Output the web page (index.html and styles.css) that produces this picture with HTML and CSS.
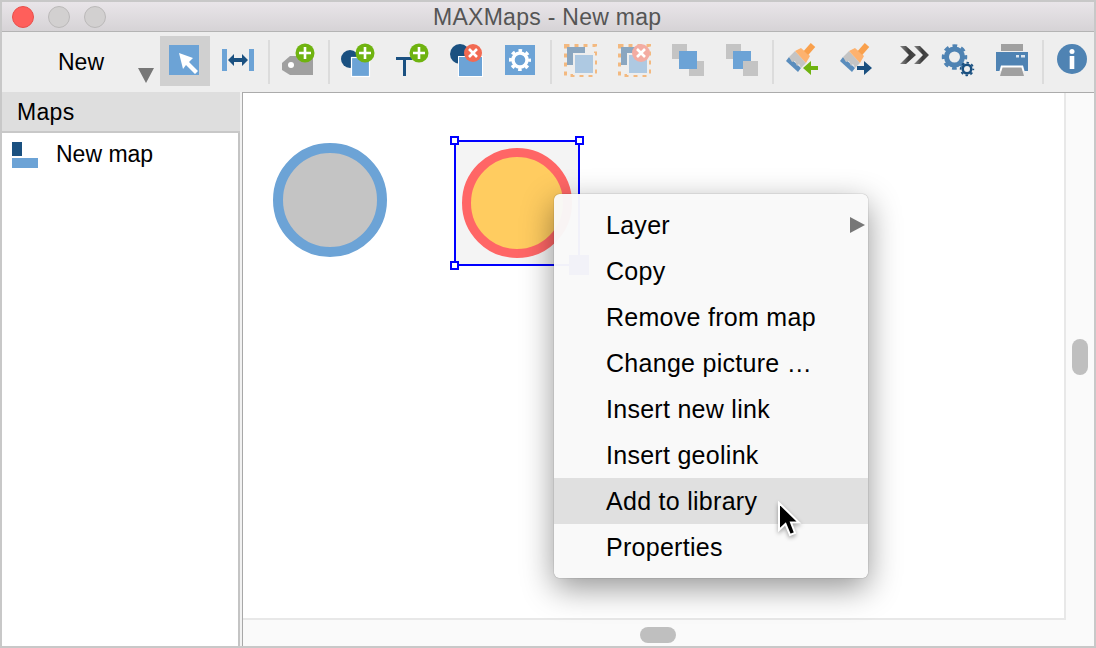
FILE: index.html
```html
<!DOCTYPE html>
<html lang="en">
<head>
<meta charset="utf-8">
<title>MAXMaps - New map</title>
<link rel="stylesheet" href="styles.css">
</head>
<body>
<div class="window">
  <header class="titlebar">
    <div class="lights"><span class="light red"></span><span class="light"></span><span class="light"></span></div>
    <div class="title">MAXMaps - New map</div>
  </header>
  <nav class="toolbar">
    <div class="new-btn"><span class="new-label">New</span><svg class="new-arrow" width="16" height="15" viewBox="0 0 16 15"><path d="M0 0H16L8 15Z" fill="#777"/></svg></div>
    <svg class="tool selected" width="50" height="50" viewBox="0 0 50 50"><rect x="9" y="9" width="30" height="30" fill="#6ca3d6"/><path d="M19 17 33 22 29 26 38 35 35 38 26 29 23 33Z" fill="#fff"/></svg>
    <svg class="tool" width="54" height="50" viewBox="0 0 54 50"><rect x="11" y="13" width="5" height="22" fill="#6ca3d6"/><rect x="38" y="13" width="5" height="22" fill="#6ca3d6"/><path d="M17 24 23 18V22H31V18L37 24 31 30V26H23V30Z" fill="#1a5080"/></svg>
    <span class="sep"></span>
    <svg class="tool" width="54" height="50" viewBox="0 0 54 50"><path d="M11 27 19 20H42V39H19L11 34Z" fill="#a0a0a0"/><circle cx="20" cy="29" r="3" fill="#fff"/><circle cx="34" cy="17" r="9.5" fill="#6fb310"/><path d="M34 11V23M28 17H40" stroke="#fff" stroke-width="2.6"/></svg>
    <span class="sep"></span>
    <svg class="tool" width="54" height="50" viewBox="0 0 54 50"><circle cx="19" cy="23" r="9" fill="#1a5080"/><rect x="20.5" y="21.5" width="18" height="19" fill="#6ca3d6" stroke="#fff" stroke-width="1.2"/><circle cx="34" cy="17" r="9.5" fill="#6fb310"/><path d="M34 11V23M28 17H40" stroke="#fff" stroke-width="2.6"/></svg>
    <svg class="tool" width="54" height="50" viewBox="0 0 54 50"><rect x="11" y="21" width="16" height="3" fill="#1a5080"/><rect x="18" y="24" width="3" height="16" fill="#1a5080"/><circle cx="34" cy="17" r="9.5" fill="#6fb310"/><path d="M34 11V23M28 17H40" stroke="#fff" stroke-width="2.6"/></svg>
    <svg class="tool" width="54" height="50" viewBox="0 0 54 50"><circle cx="21" cy="18" r="10" fill="#1a5080"/><rect x="19.5" y="20.5" width="24" height="20" fill="#6ca3d6" stroke="#fff" stroke-width="1"/><circle cx="34" cy="17" r="9" fill="#f26a52"/><path d="M30 13 38 21M38 13 30 21" stroke="#fff" stroke-width="2.6"/></svg>
    <svg class="tool" width="54" height="50" viewBox="0 0 54 50"><rect x="12" y="9" width="30" height="30" fill="#6ca3d6"/><circle cx="27" cy="24" r="7" fill="none" stroke="#fff" stroke-width="3.4"/><circle cx="27" cy="24" r="9.5" fill="none" stroke="#fff" stroke-width="3" stroke-dasharray="3.6 3.86" stroke-dashoffset="1.8"/></svg>
    <span class="sep"></span>
    <svg class="tool" width="54" height="50" viewBox="0 0 54 50"><rect x="12.5" y="9.5" width="30" height="30" fill="none" stroke="#f3b980" stroke-width="3" stroke-dasharray="4 5"/><rect x="14" y="11" width="18" height="18" fill="#8aa6c0"/><rect x="21" y="18" width="20" height="20" fill="#aec9e2" stroke="#eee" stroke-width="2"/></svg>
    <svg class="tool" width="54" height="50" viewBox="0 0 54 50"><rect x="12.5" y="9.5" width="30" height="30" fill="none" stroke="#f3b980" stroke-width="3" stroke-dasharray="4 5"/><rect x="14" y="11" width="18" height="18" fill="#8aa6c0"/><rect x="21" y="18" width="20" height="20" fill="#aec9e2" stroke="#eee" stroke-width="2"/><circle cx="34" cy="17" r="9" fill="#f3aca2"/><path d="M30 13 38 21M38 13 30 21" stroke="#fff" stroke-width="2.6"/></svg>
    <svg class="tool" width="54" height="50" viewBox="0 0 54 50"><rect x="11" y="8" width="15" height="15" fill="#c4c4c4"/><rect x="28" y="25" width="15" height="15" fill="#c4c4c4"/><rect x="18" y="15" width="18" height="18" fill="#6ca3d6"/></svg>
    <svg class="tool" width="54" height="50" viewBox="0 0 54 50"><rect x="11" y="8" width="15" height="15" fill="#c4c4c4"/><rect x="18" y="15" width="18" height="18" fill="#6ca3d6"/><rect x="28" y="25" width="15" height="15" fill="#c4c4c4"/></svg>
    <span class="sep"></span>
    <svg class="tool" width="54" height="50" viewBox="0 0 54 50"><path d="M11 25 14 21 26 32 23 36Z" fill="#5a8dbd"/><path d="M14 21 20 15 31 27 26 32 24 28 22 30 20 25 17 26Z" fill="#c4c4c4"/><path d="M20 15 26 12 35 20 31 27Z" fill="#fdb26f"/><path d="M38 9 31 17" stroke="#f9a04c" stroke-width="6"/><path d="M28 32 36 25V30H43V34H36V39Z" fill="#6fb310"/></svg>
    <svg class="tool" width="54" height="50" viewBox="0 0 54 50"><path d="M11 25 14 21 26 32 23 36Z" fill="#5a8dbd"/><path d="M14 21 20 15 31 27 26 32 24 28 22 30 20 25 17 26Z" fill="#c4c4c4"/><path d="M20 15 26 12 35 20 31 27Z" fill="#fdb26f"/><path d="M38 9 31 17" stroke="#f9a04c" stroke-width="6"/><path d="M43 32 35 25V30H28V34H35V39Z" fill="#1a5080"/></svg>
    <svg class="tool narrow" width="48" height="50" viewBox="0 0 48 50"><defs><linearGradient id="chev"><stop offset="0" stop-color="#8a8a8a"/><stop offset=".55" stop-color="#3c3c3c"/><stop offset="1" stop-color="#4c4c4c"/></linearGradient></defs><path d="M17 10H23L33 19 23 28H17L26 19Z" fill="url(#chev)"/><path d="M31 10H37L46 19 37 28H31L40 19Z" fill="url(#chev)"/></svg>
    <svg class="tool" width="54" height="50" viewBox="0 0 54 50"><circle cx="23.500" cy="21" r="8" fill="none" stroke="#4f83b3" stroke-width="5"/><circle cx="23.500" cy="21" r="11" fill="none" stroke="#4f83b3" stroke-width="3.500" stroke-dasharray="4.600 4.040" stroke-dashoffset="2.300"/><circle cx="36" cy="33" r="4.250" fill="none" stroke="#1a5080" stroke-width="2.500"/><circle cx="36" cy="33" r="6.300" fill="none" stroke="#1a5080" stroke-width="1.800" stroke-dasharray="2.500 2.450" stroke-dashoffset="1.250"/></svg>
    <svg class="tool" width="54" height="50" viewBox="0 0 54 50"><rect x="16" y="8" width="22" height="7" fill="#a0a0a0"/><rect x="11" y="16" width="32" height="19" fill="#4f83b3"/><rect x="31" y="19" width="3" height="2.500" fill="#dce6f0"/><rect x="36" y="19" width="4" height="2.500" fill="#dce6f0"/><path d="M16 29.500H38L39.500 35H14.500Z" fill="#fff"/><path d="M17.500 31.500H36.500L39 40H15Z" fill="#a0a0a0"/></svg>
    <span class="sep"></span>
    <svg class="tool last" width="54" height="50" viewBox="0 0 54 50"><circle cx="27" cy="23" r="15" fill="#4f83b3"/><circle cx="27" cy="15.500" r="2.500" fill="#fff"/><rect x="24.700" y="20" width="4.600" height="13" fill="#fff"/></svg>
  </nav>
  <main class="body">
    <aside class="sidebar">
      <div class="side-head">Maps</div>
      <div class="side-row">
        <svg class="map-icon" width="26" height="26" viewBox="0 0 26 26"><rect width="10" height="14" fill="#1a5080"/><rect y="16" width="26" height="10" fill="#6ca3d6"/></svg>
        <span>New map</span>
      </div>
    </aside>
    <section class="workspace">
      <div class="pane">
        <div class="view-row">
          <div class="canvas">
            <div class="circle blue"></div>
            <div class="selection">
              <span class="handle tl"></span><span class="handle tr"></span><span class="handle bl"></span><span class="handle br"></span>
            </div>
            <div class="circle orange"></div>
            <div class="menu">
              <div class="item">Layer<span class="sub-arrow"></span></div>
              <div class="item">Copy</div>
              <div class="item">Remove from map</div>
              <div class="item">Change picture …</div>
              <div class="item">Insert new link</div>
              <div class="item">Insert geolink</div>
              <div class="item active">Add to library</div>
              <div class="item">Properties</div>
              <span class="ghost"></span>
            </div>
            <svg class="cursor" width="28" height="38" viewBox="0 0 28 38"><path d="M3 2V29L9.500 23 14 34 19 32 15 21.500H23Z" fill="#000" stroke="#fff" stroke-width="2"/></svg>
          </div>
          <div class="vscroll"><span class="vthumb"></span></div>
        </div>
        <div class="hscroll"><span class="hthumb"></span></div>
      </div>
    </section>
  </main>
</div>
</body>
</html>
```
FILE: styles.css
```css
* { box-sizing: border-box; }
html, body { margin: 0; padding: 0; }
body { width: 1096px; height: 648px; overflow: hidden; background: #fff; font-family: "Liberation Sans", Arial, sans-serif; color: #000; }
.window { width: 1096px; height: 648px; border: 2px solid #c8c8c8; display: flex; flex-direction: column; overflow: hidden; }

.titlebar { height: 30px; flex: none; display: flex; align-items: center; position: relative; background: linear-gradient(#e9e5e9, #d6d3d6); border-bottom: 1px solid #b4b4b4; }
.lights { display: flex; gap: 14px; margin-left: 10px; }
.light { width: 22px; height: 22px; border-radius: 50%; background: #d2d0d0; border: 1px solid #bbb9b9; }
.light.red { background: #ff5f5b; border-color: #e8504c; }
.title { position: absolute; left: 431px; top: 2px; font-size: 23px; letter-spacing: .28px; line-height: 26px; color: #555; white-space: nowrap; }

.toolbar { height: 60px; flex: none; display: flex; align-items: flex-start; padding-top: 4px; background: #eee; overflow: hidden; }
.new-btn { width: 158px; height: 50px; flex: none; display: flex; padding-left: 56px; }
.new-label { font-size: 23px; line-height: 52px; }
.new-arrow { margin-left: 34px; margin-top: 32px; }
.tool { flex: none; display: block; }
.tool.selected { background: #d0d0d0; margin-right: 1px; }
.sep { flex: none; width: 6px; height: 44px; margin-top: 4px; padding-left: 3px; display: flex; }
.sep::before { content: ""; width: 2px; background: #dcdcdc; }

.body { flex: 1; display: flex; min-height: 0; }
.sidebar { width: 238px; flex: none; background: #fff; border-right: 2px solid #c4c4c4; }
.side-head { height: 41px; margin-right: -2px; background: #dedede; border-bottom: 2px solid #c8c8c8; padding-left: 15px; font-size: 23px; letter-spacing: .3px; line-height: 40px; }
.side-row { display: flex; align-items: flex-start; padding: 9px 0 0 10px; font-size: 23px; line-height: 24px; }
.map-icon { margin-right: 18px; }

.workspace { flex: 1; display: flex; min-width: 0; padding-left: 2px; background: #f2f2f2; }
.pane { flex: 1; display: flex; flex-direction: column; min-width: 0; border-left: 1px solid #a8a8a8; border-top: 1px solid #ababab; background: #fff; }
.view-row { flex: 1; display: flex; min-height: 0; }
.canvas { flex: 1; position: relative; background: #fff; border-right: 2px solid #e8e8e8; border-bottom: 2px solid #e8e8e8; }
.vscroll { width: 28px; flex: none; background: #fafafa; display: flex; justify-content: center; padding-top: 246px; }
.vthumb { width: 16px; height: 36px; border-radius: 8px; background: #bfbfbf; }
.hscroll { height: 26px; flex: none; background: #fafafa; padding: 7px 0 0 397px; }
.hthumb { display: block; width: 36px; height: 16px; border-radius: 8px; background: #bfbfbf; }

.circle { position: absolute; border-radius: 50%; }
.circle.blue { left: 30px; top: 50px; width: 114px; height: 114px; background: #c4c4c4; border: 10px solid #6ca3d6; }
.circle.orange { left: 219px; top: 55px; width: 110px; height: 110px; background: #ffcc60; border: 9px solid #ff6666; }
.selection { position: absolute; left: 211px; top: 47px; width: 126px; height: 126px; background: #f4f4f4; border: 2px solid #0000ff; }
.handle { position: absolute; width: 9px; height: 9px; background: #fff; border: 2px solid #0000ff; }
.handle.tl { left: -6px; top: -6px; }
.handle.tr { right: -6px; top: -6px; }
.handle.bl { left: -6px; bottom: -6px; }
.handle.br { right: -6px; bottom: -6px; }

.menu { position: absolute; left: 311px; top: 101px; width: 314px; height: 384px; padding-top: 8px; border-radius: 6px; background: rgba(249, 249, 249, .97); box-shadow: 0 0 1px rgba(0,0,0,.6), 0 10px 32px rgba(0,0,0,.42); font-size: 25px; letter-spacing: .28px; }
.item { height: 46px; line-height: 46px; padding-left: 52px; position: relative; white-space: nowrap; }
.item.active { background: #e0e0e0; }
.sub-arrow { position: absolute; left: 296px; top: 15px; border-left: 15px solid #777; border-top: 8px solid transparent; border-bottom: 8px solid transparent; }
.ghost { position: absolute; left: 15px; top: 61px; width: 20px; height: 20px; background: #f2f2f8; }
.cursor { position: absolute; left: 533px; top: 408px; filter: drop-shadow(0 2px 2px rgba(0,0,0,.35)); }
```
